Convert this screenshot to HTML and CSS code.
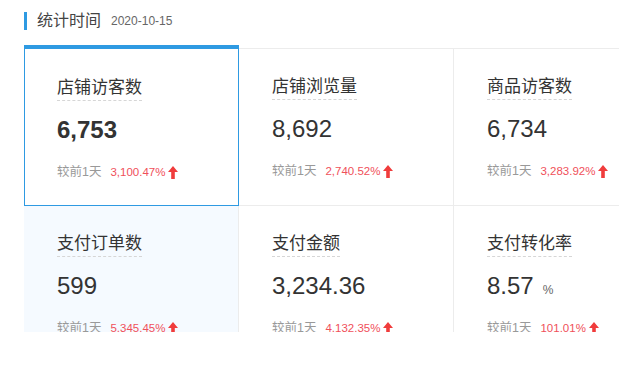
FILE: index.html
```html
<!DOCTYPE html>
<html lang="zh-CN">
<head>
<meta charset="UTF-8" /><meta name="viewport" content="width=device-width, initial-scale=1" />
<title>统计时间</title>
<link rel="stylesheet" href="styles.css">
</head>
<body>
<main class="panel">
  <header class="panel-head">
    <h2 class="panel-title">统计时间</h2>
    <span class="panel-date">2020-10-15</span>
  </header>
  <section class="stats">
    <div class="stat active">
      <div class="stat-name">店铺访客数</div>
      <div class="stat-value bold">6,753</div>
      <div class="stat-cmp">较前1天<span class="rate">3,100.47%</span><svg class="up" viewBox="0 0 10 13"><path d="M5 0L10 6H6.8V13H3.2V6H0Z"/></svg></div>
    </div>
    <div class="stat">
      <div class="stat-name">店铺浏览量</div>
      <div class="stat-value">8,692</div>
      <div class="stat-cmp">较前1天<span class="rate">2,740.52%</span><svg class="up" viewBox="0 0 10 13"><path d="M5 0L10 6H6.8V13H3.2V6H0Z"/></svg></div>
    </div>
    <div class="stat">
      <div class="stat-name">商品访客数</div>
      <div class="stat-value">6,734</div>
      <div class="stat-cmp">较前1天<span class="rate">3,283.92%</span><svg class="up" viewBox="0 0 10 13"><path d="M5 0L10 6H6.8V13H3.2V6H0Z"/></svg></div>
    </div>
    <div class="stat hover">
      <div class="stat-name">支付订单数</div>
      <div class="stat-value">599</div>
      <div class="stat-cmp">较前1天<span class="rate">5,345.45%</span><svg class="up" viewBox="0 0 10 13"><path d="M5 0L10 6H6.8V13H3.2V6H0Z"/></svg></div>
    </div>
    <div class="stat">
      <div class="stat-name">支付金额</div>
      <div class="stat-value">3,234.36</div>
      <div class="stat-cmp">较前1天<span class="rate">4,132.35%</span><svg class="up" viewBox="0 0 10 13"><path d="M5 0L10 6H6.8V13H3.2V6H0Z"/></svg></div>
    </div>
    <div class="stat">
      <div class="stat-name">支付转化率</div>
      <div class="stat-value">8.57<span class="unit">%</span></div>
      <div class="stat-cmp">较前1天<span class="rate">101.01%</span><svg class="up" viewBox="0 0 10 13"><path d="M5 0L10 6H6.8V13H3.2V6H0Z"/></svg></div>
    </div>
  </section>
</main>
</body>
</html>
```
FILE: styles.css
```css
:root{--blue:#2e9ae2;--line:#ececec;--txt:#333;--sub:#999;--red:#f0505a;}
*,*:before,*:after{box-sizing:border-box;}
body{margin:0;background:#fff;font-family:"Liberation Sans","Noto Sans CJK SC",sans-serif;color:var(--txt);}
.panel{height:332px;overflow:hidden;padding:0 0 0 24px;}
.panel-head{display:flex;align-items:center;gap:10px;height:48px;padding:0 0 6px 0;}
.panel-title{margin:0;font-size:16px;font-weight:400;line-height:18px;color:#444;padding-left:10px;border-left:3px solid var(--blue);}
.panel-date{font-size:12px;color:#666;}
.stats{display:grid;grid-template-columns:repeat(3,215px);grid-auto-rows:157px;border-top:1px solid var(--line);width:645px;}
.stat{position:relative;padding:26px 32px 0 33px;border-right:1px solid var(--line);border-bottom:1px solid var(--line);}
.stat.active{padding-top:27px;}
.stat.active::after{content:'';position:absolute;left:0;right:-1px;top:-4px;bottom:-1px;border:1px solid var(--blue);border-top-width:4px;pointer-events:none;}
.stat.hover{background:#f5faff;}
.stat-name{display:inline-block;font-size:17px;line-height:24px;color:var(--txt);border-bottom:1px dashed #d6d6d6;}
.stat-value{margin-top:13px;height:32px;font-size:24px;line-height:32px;color:var(--txt);}
.stat-value.bold{font-weight:700;}
.unit{font-size:12px;line-height:1;color:#666;margin-left:9px;}
.stat-cmp{display:flex;align-items:center;margin-top:16px;font-size:12.5px;line-height:20px;color:var(--sub);}
.rate{color:var(--red);margin-left:9px;font-size:11.5px;}
.up{width:10px;height:13px;margin-left:3px;fill:#f03c3c;}
```
